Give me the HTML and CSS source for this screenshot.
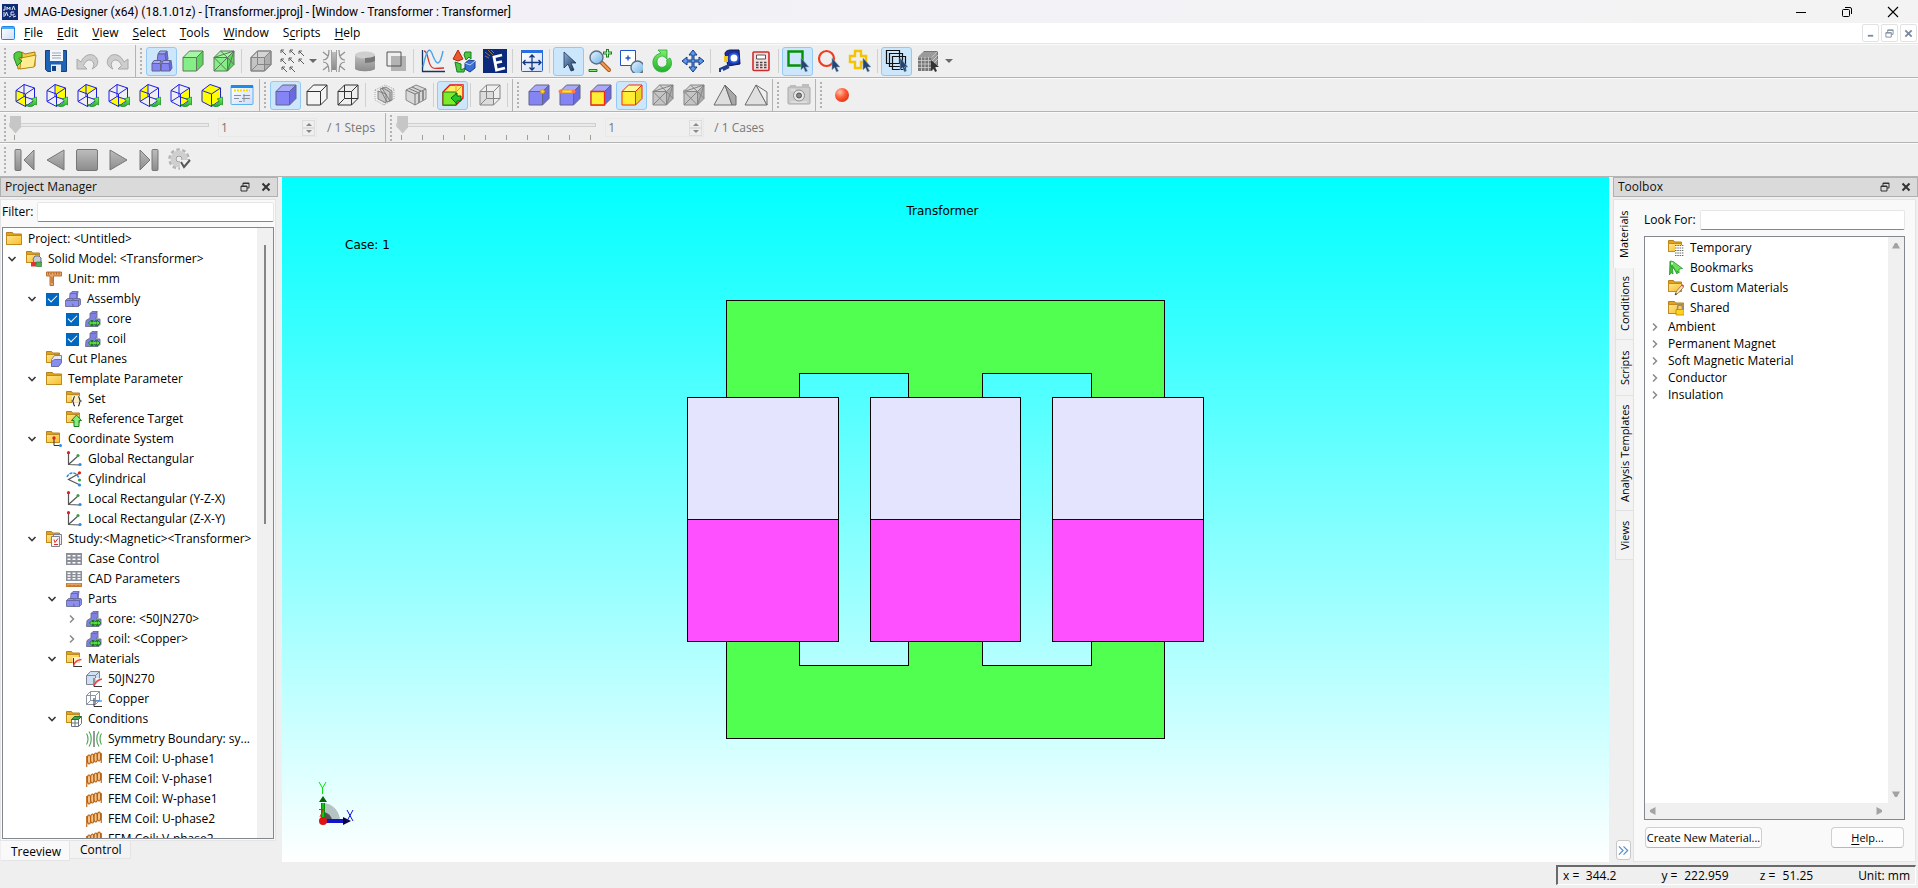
FILE: index.html
```html
<!DOCTYPE html>
<html lang="en">
<head>
<meta charset="utf-8">
<title>JMAG-Designer (x64) (18.1.01z) - [Transformer.jproj]</title>
<link rel="stylesheet" href="styles.css">
</head>
<body>
<svg class="defs" aria-hidden="true">
  <defs>
    <linearGradient id="gFold" x1="0" y1="0" x2="1" y2="1"><stop offset="0" stop-color="#ffe58a"/><stop offset="1" stop-color="#f7bd2c"/></linearGradient>
    <linearGradient id="gGray" x1="0" y1="0" x2="0" y2="1"><stop offset="0" stop-color="#bdbdbd"/><stop offset="1" stop-color="#8c8c8c"/></linearGradient>
    <linearGradient id="gLens" x1="0" y1="0" x2="1" y2="1"><stop offset="0" stop-color="#e8f6ff"/><stop offset="1" stop-color="#6fb2e4"/></linearGradient>
    <linearGradient id="gGreen" x1="0" y1="0" x2="0" y2="1"><stop offset="0" stop-color="#7df06a"/><stop offset="1" stop-color="#21b12b"/></linearGradient>
    <linearGradient id="gCur" x1="0" y1="0" x2="1" y2="1"><stop offset="0" stop-color="#8fb0dd"/><stop offset="1" stop-color="#16304f"/></linearGradient>
    <radialGradient id="gRed" cx="0.35" cy="0.3" r="0.8"><stop offset="0" stop-color="#ffc0a8"/><stop offset="0.5" stop-color="#ff5a35"/><stop offset="1" stop-color="#d8300f"/></radialGradient>
    <linearGradient id="gWin" x1="0" y1="0" x2="1" y2="1"><stop offset="0" stop-color="#ffffff"/><stop offset="1" stop-color="#cfdcf8"/></linearGradient>
  </defs>
  <symbol id="cube" viewBox="0 0 24 24"><g class="k"><path class="ft" d="M2 8.500 8.500 2H22l-6.500 6.500z"/><path class="fs" d="M15.500 8.500 22 2v13.500L15.500 22z"/><path class="ff" d="M2 8.500h13.500V22H2z"/></g></symbol>
  <symbol id="wire" viewBox="0 0 24 24"><path class="k nf" d="M2 8.500 8.500 2H22v13.500L15.500 22H2zM2 8.500h13.500V22M15.500 8.500 22 2M8.500 2v13.500H22M8.500 15.500 2 22"/></symbol>
  <symbol id="mesh" viewBox="0 0 24 24"><use href="#cube"/><path class="k nf" d="m2 8.500 13.500 13.500M15.500 8.500 2 22M15.500 8.500 22 15.500M15.500 22 22 2M8.500 2l7 6.500M2 8.500 22 2"/></symbol>
  <symbol id="cubes" viewBox="0 0 24 24"><g class="k"><path class="ft" d="m8 5 2-3h7l-2 3z"/><path class="fs" d="m15 5 2-3 1 8-2 3z"/><path class="ff" d="M8 5h7l1 8H7z"/><path class="ft" d="m2 14.500 2-3h7l-1 3z"/><path class="ff" d="M2 14.500h8.500V22H2z"/><path class="ft" d="m11.500 14.500 2-3h7l-1.500 3z"/><path class="fs" d="m19 14.500 2-3 1 7.500-2 3z"/><path class="ff" d="M11.500 14.500H19l1 7.500h-9z"/></g></symbol>
  <symbol id="go" viewBox="0 0 24 24"><path d="M12 21c4 2 8 0 8-4l-2-1 5.500-2v8l-1.500-1c-2 3-7 4-10 0z" fill="url(#gGreen)" stroke="#118a1c" stroke-width=".7"/></symbol>
  <symbol id="vw" viewBox="0 0 24 24"><path d="M3 7.500 11 1.500 21.500 5v12L12.500 23.500 3 18.500zM3 7.500l9.500 3.500v12.500M12.500 11l9-6M11 1.500v12L3 18.500M11 13.500 21.500 17" fill="none" stroke="#1c1ce6"/><use href="#go"/></symbol>
  <symbol id="cur" viewBox="0 0 24 24"><path d="M7 3v16l4-4 3 7 3-1-3-7h5z" fill="url(#gCur)" stroke="#1d3557" stroke-width=".8"/></symbol>
  <symbol id="scur" viewBox="0 0 24 24"><path d="M15 9v12l2.500-2.500L19.500 23l2-1-2-4H23z" fill="#23456f" stroke="#8fa9c8" stroke-width=".6"/></symbol>
  <symbol id="cross" viewBox="0 0 24 24"><path d="m12 1 4 5h-3v5h5V8l5 4-5 4v-3h-5v5h3l-4 5-4-5h3v-5H6v3l-5-4 5-4v3h5V6H8z" fill="#5d98ec" stroke="#12387f"/></symbol>
  <symbol id="mag" viewBox="0 0 24 24"><path d="m13 13 8 8" stroke="#a85a20" stroke-width="4" stroke-linecap="round"/><path d="m14 14 7 7" stroke="#f59a4c" stroke-width="2" stroke-linecap="round"/><circle cx="8.500" cy="8.500" r="6.500" fill="url(#gLens)" stroke="#5c6f86" stroke-width="1.400"/></symbol>

  <symbol id="fold" viewBox="0 0 16 16"><path d="M.5 13.500v-12h6l1 1.500h8v10.500z" fill="#e0a41f" stroke="#b5801a"/><path d="M.5 4.500h15v9H.5z" fill="url(#gFold)" stroke="#c08b1c"/></symbol>
  <symbol id="sfold" viewBox="0 0 16 16"><path d="M.5 11.500V.5h5l1 1.500h7v9.500z" fill="#e0a41f" stroke="#b5801a"/><path d="M.5 3.500h13v8H.5z" fill="url(#gFold)" stroke="#c08b1c"/></symbol>
  <symbol id="i-model" viewBox="0 0 16 16"><use href="#sfold"/><path d="M7 8 9 5h4l2 2v5H8z" fill="#c8cad8" stroke="#666a80"/><path d="M5 11h5v4.500H5z" fill="#e0352b"/><path d="M10.500 11h5v4.500h-5z" fill="#4fae4b" stroke="#23702a" stroke-width=".6"/></symbol>
  <symbol id="i-unit" viewBox="0 0 16 16"><path d="M.5 1h15v4H7.500v9.500h-3.500V5H.5z" fill="#e8a468" stroke="#b5651d" stroke-width=".9"/><path d="M2.500 1.500v2M5 1.500v2M8 1.500v2M10.500 1.500v2M13 1.500v2M5 7h2M5 9h2M5 11h2" stroke="#9a5212" stroke-width=".8"/></symbol>
  <symbol id="i-asm" viewBox="0 0 16 16"><g fill="#8e8ef0" stroke="#5f6390" stroke-width=".8"><path d="M5 2.500 7 .500h6L12 8H4.500z"/><path d="M5 2.500h6.500l1.500-2M11.500 2.500 12 8"/><path d="M.5 9.500 2.500 7.500h5.500v8H.5z"/><path d="m8 9.500 1.500-2h5l1 1v5l-2 2H8z"/><path d="M.5 9.500h13v6M13.500 9.500l1.500-2"/></g></symbol>
  <symbol id="i-part" viewBox="0 0 16 16"><g fill="#8080e2" stroke="#6a6f86" stroke-width=".9"><path d="M1 9.500 5 7V2.500L7 .500h5L10.500 3v5H15v5.500l-2 2H.5z"/><path d="M5 2.500h5.500L12 .500v7"/></g><path d="m3.500 12 3-3v2h1V9l2 2 1.500-2v2h1V9l3 3-3 3v-2h-1v2L9.500 13l-2 2v-2h-1v2z" fill="#55e03c" stroke="#14681a" stroke-width=".8"/></symbol>
  <symbol id="i-cut" viewBox="0 0 16 16"><use href="#sfold"/><path d="m5.500 8.500 3-4h7v7l-3 4h-7z" fill="#e4e7f4" stroke="#7c8299"/><path d="m5.500 10.500 3-2h7v3l-3 4h-7z" fill="#8a8df0" stroke="#6a6fa8"/></symbol>
  <symbol id="i-set" viewBox="0 0 16 16"><use href="#sfold"/><path d="M6 5h9v10H6z" fill="#fff" opacity=".7"/><path d="M9 5.500c-2 0-1 4-2.500 4.500C8 10.500 7 15 9 15M12 5.500c2 0 1 4 2.500 4.500-1.500.5-.5 5-2.500 5" fill="none" stroke="#333" stroke-width="1.200"/></symbol>
  <symbol id="i-ref" viewBox="0 0 16 16"><use href="#sfold"/><path d="m10.500 4 5 5.500h-2.500v6H8v-6H5.500z" fill="#86ee7c" stroke="#1c7d24"/></symbol>
  <symbol id="i-coord" viewBox="0 0 16 16"><use href="#sfold"/><path d="M8 7v7.500h7" fill="none" stroke="#333"/><circle cx="8" cy="7" r="1.700" fill="#e02020"/><circle cx="14.500" cy="14.500" r="1.500" fill="#2a8ae0"/></symbol>
  <symbol id="i-axes" viewBox="0 0 16 16"><path d="M2.500 2v11.500L14 14M2.500 13.500 12 5" fill="none" stroke="#555" stroke-width="1.200"/><circle cx="2.500" cy="1.700" r="1.600" fill="#e02020"/><circle cx="12" cy="4.500" r="1.600" fill="#3f9e45"/><circle cx="14" cy="13.500" r="1.600" fill="#2a8ae0"/></symbol>
  <symbol id="i-cyl" viewBox="0 0 16 16"><path d="M14 2 2.500 8.500 14 14" fill="none" stroke="#555" stroke-width="1.200"/><path d="M1 6c2-5 9-6 12 1" fill="none" stroke="#2a8ae0" stroke-width="1.600" stroke-dasharray="3 1"/><circle cx="13.500" cy="1.800" r="1.600" fill="#e02020"/><circle cx="13.500" cy="9" r="1.600" fill="#3f9e45"/><circle cx="13.500" cy="14" r="1.600" fill="#2a8ae0"/></symbol>
  <symbol id="i-study" viewBox="0 0 16 16"><use href="#sfold"/><path d="M7.500 3.500h8v10h-8z" fill="#eee" stroke="#7c8090"/><path d="M5.500 5.500h8v10h-8z" fill="#f6f6f6" stroke="#7c8090"/><path d="m8 8.500 1 3 3-4M8 13.500h4" fill="none" stroke="#d03030"/></symbol>
  <symbol id="i-grid" viewBox="0 0 16 16"><path d="M0 2h16v12H0z" fill="#8b8f9a"/><path d="M1.500 4h3v1.500h-3zM6.500 4h3v1.500h-3zM11.500 4h3v1.500h-3zM1.500 7.500h3V9h-3zM6.500 7.500h3V9h-3zM11.500 7.500h3V9h-3zM1.500 11h3v1.500h-3zM6.500 11h3v1.500h-3zM11.500 11h3v1.500h-3z" fill="#fff"/></symbol>
  <symbol id="i-cad" viewBox="0 0 16 16"><path d="M0 0h16v10H0z" fill="#8b8f9a"/><path d="M1.500 1.500h3V3h-3zM6.500 1.500h3V3h-3zM11.500 1.500h3V3h-3zM1.500 4.300h3v1.500h-3zM6.500 4.300h3v1.500h-3zM11.500 4.300h3v1.500h-3zM1.500 7h3v1.500h-3zM6.500 7h3v1.500h-3zM11.500 7h3v1.500h-3z" fill="#fff"/><path d="M0 12h16v4H0z" fill="#c9762d"/><path d="M2 12.500v2M4 12.500v1.500M6 12.500v2M8 12.500v1.500M10 12.500v2M12 12.500v1.500M14 12.500v2" stroke="#f7cf9c"/></symbol>
  <symbol id="i-mat" viewBox="0 0 16 16"><use href="#sfold"/><path d="M6.500 6h9v9.500h-9z" fill="#fff" opacity=".7"/><path d="M7.500 7v8.500H16" fill="none" stroke="#333"/><path d="M7.500 15c1-4 3-6 8-6.500" fill="none" stroke="#f04040" stroke-width="1.300"/></symbol>
  <symbol id="i-steel" viewBox="0 0 16 16"><path d="m.5 4.500 4-4h9v9l-4 4h-9zM.5 4.500h9v9M9.500 4.500l4-4" fill="#cfe0f5" stroke="#7d8492"/><path d="M7 7h9v9H7z" fill="#fff" opacity=".6"/><path d="M8 7v8.500h8" fill="none" stroke="#333"/><path d="M8 15c1-4 3-6 8-7" fill="none" stroke="#f04040" stroke-width="1.300"/></symbol>
  <symbol id="i-cu" viewBox="0 0 16 16"><path d="m.5 4.500 4-4h9v9l-4 4h-9zM.5 4.500h9v9M9.500 4.500l4-4M4.500.5v9l-4 4M4.500 9.500h9" fill="#fff" stroke="#8d93a0"/><path d="M8 7v8.500h8" fill="none" stroke="#333"/><path d="M8 10h8" stroke="#4a90d9" stroke-width="1.300"/></symbol>
  <symbol id="i-cond" viewBox="0 0 16 16"><use href="#sfold"/><path d="m5.500 8.500 3-3h7v7l-3 3h-7zM5.500 8.500h7v7M9 8.500v7M5.500 12h7" fill="#fff" stroke="#6d7280"/><path d="m5.500 8.500 3-3h7l-3 3z" fill="#3da548" stroke="#25702e"/></symbol>
  <symbol id="i-sym" viewBox="0 0 16 16"><path d="M8 0v16" stroke="#333"/><path d="M.5 2.500c2 3 2 8 0 11M3 .5c3 4 3 11 0 15M15.500 2.500c-2 3-2 8 0 11M13 .5c-3 4-3 11 0 15" fill="none" stroke="#4fa657" stroke-width="1.200"/></symbol>
  <symbol id="i-coil" viewBox="0 0 16 16"><path d="M.7 16V5M15.300 2v10" stroke="#c9762d" stroke-width="1.300"/><g fill="#f4c48c" stroke="#b4600f" stroke-width="1.200"><ellipse cx="3" cy="8.500" rx="1.700" ry="4.500"/><ellipse cx="6.300" cy="7.500" rx="1.700" ry="4.500"/><ellipse cx="9.700" cy="6.500" rx="1.700" ry="4.500"/><ellipse cx="13" cy="5.500" rx="1.700" ry="4.500"/></g></symbol>
  <symbol id="i-temp" viewBox="0 0 16 16"><use href="#sfold"/><path d="M7 5h9v11H7z" fill="#fff"/><path d="M7 5.500h9M7 8h9M7 10.500h9M7 13h9M7 15.500h9" stroke="#666" stroke-dasharray="1.500 .8"/></symbol>
  <symbol id="i-book" viewBox="0 0 16 16"><path d="M2 2 4 5l1 9-2-1.500L1.500 15z" fill="#3fbf35" stroke="#21942a" stroke-width=".8"/><path d="M2 1 5 1.500l9.500 7-3.500.5v4L3 6z" fill="#6fe05a" stroke="#21942a" stroke-width=".8"/><path d="m4 5 5 9 .5-3" fill="#4fce40" stroke="#21942a" stroke-width=".8"/><circle cx="4" cy="3.500" r="1" fill="#fff"/></symbol>
  <symbol id="i-cust" viewBox="0 0 16 16"><use href="#sfold"/><path d="m7 15 1.500-4 5.500-6 2 1.500-5.500 6.500z" fill="#fbe3b6" stroke="#8a6a3c" stroke-width=".8"/><path d="m13.500 5.500 1-1.200 1.500 1.500-1 1.200z" fill="#e04848"/><path d="m7 15 .7-2 1.300 1.200z" fill="#222"/></symbol>
  <symbol id="i-share" viewBox="0 0 16 16"><use href="#fold"/><path d="M9.500 10V7.500a2.500 2.500 0 0 1 5 0V10" fill="none" stroke="#8d8d8d" stroke-width="1.400"/><path d="M8 9.500h8V15H8z" fill="#ffd21f" stroke="#b88d00" stroke-width=".8"/></symbol>
  <symbol id="dn" viewBox="0 0 10 10"><path d="m1.500 3 3.500 3.500L8.500 3" fill="none" stroke="#3a3a3a" stroke-width="1.600"/></symbol>
  <symbol id="rt" viewBox="0 0 10 10"><path d="M3 1.500 6.500 5 3 8.500" fill="none" stroke="#8a8a8a" stroke-width="1.500"/></symbol>
  <symbol id="float" viewBox="0 0 10 10"><path d="M1 4h6v5H1zM3 4V1h6v5H7" fill="none" stroke="currentColor"/><path d="M1 4.500h6M3 1.500h6" stroke="currentColor"/></symbol>
  <symbol id="cls" viewBox="0 0 10 10"><path d="m1.500 1.500 7 7M8.500 1.500l-7 7" stroke="currentColor" stroke-width="2"/></symbol>
</svg>

<div class="app">
  <header class="titlebar">
    <svg class="appicon" viewBox="0 0 16 16"><path d="M0 0h16v16H0z" fill="#0d2a72"/><path d="M3 2v4H1M5 6V3l1.500 2L8 3v3M10 6l1.500-4L13 6M12 8H9v3h3V9.500M3 12l1.500-4L6 12M2 8v5M7 13l2-1M11 13l3-1" fill="none" stroke="#dfe6ff"/></svg>
    <h1>JMAG-Designer (x64) (18.1.01z) - [Transformer.jproj] - [Window - Transformer : Transformer]</h1>
    <div class="winctl">
      <button aria-label="Minimize"><svg viewBox="0 0 12 12"><path d="M1 6.500h10" stroke="#000"/></svg></button>
      <button aria-label="Restore"><svg viewBox="0 0 12 12"><rect x="1.500" y="3.500" width="7" height="7" rx="1" fill="none" stroke="#000"/><path d="M4 1.500h5a1.500 1.500 0 0 1 1.500 1.500v5" fill="none" stroke="#000"/></svg></button>
      <button aria-label="Close"><svg viewBox="0 0 12 12"><path d="m1 1 10 10M11 1 1 11" stroke="#000" stroke-width="1.100"/></svg></button>
    </div>
  </header>

  <nav class="menubar">
    <svg class="docicon" viewBox="0 0 14 14"><rect x=".5" y=".5" width="13" height="13" rx="1" fill="url(#gWin)" stroke="#1f86e8"/><path d="M1 1h12v2H1z" fill="#4aa8f5"/></svg>
    <button><u>F</u>ile</button><button><u>E</u>dit</button><button><u>V</u>iew</button><button><u>S</u>elect</button><button><u>T</u>ools</button><button><u>W</u>indow</button><button>S<u>c</u>ripts</button><button><u>H</u>elp</button>
    <div class="mdi">
      <button aria-label="Minimize child"><svg viewBox="0 0 10 10"><path d="M2 7.500h6" stroke="currentColor" stroke-width="2"/></svg></button>
      <button aria-label="Restore child"><svg viewBox="0 0 10 10"><use href="#float"/></svg></button>
      <button aria-label="Close child"><svg viewBox="0 0 10 10"><use href="#cls"/></svg></button>
    </div>
  </nav>

  <div class="tbrow">
    <div class="tb">
      <button aria-label="Open"><svg viewBox="0 0 24 24"><path d="M5 20 3 6l6-3 3 2 10-2v14z" fill="#f7cf45" stroke="#a97a10"/><path d="m7 20 1-11 15-3-2 12z" fill="#ffec8e" stroke="#b58a1a"/><path d="M1 5c3-3 6-3 8-1v5c-2-1-3-1-3 1l3 2-5 5L1 9z" fill="#58c93e" stroke="#1f8a24"/></svg></button>
      <button aria-label="Save"><svg viewBox="0 0 24 24"><path d="M1.500 1.500h21v21h-19l-2-2z" fill="#1f63b5" stroke="#163f80"/><path d="M6 1h13v11H6z" fill="#f4f7fb"/><path d="M8 4h9M8 6.500h9M8 9h9" stroke="#9aa4b2"/><path d="M7 15.500h10V23H7z" fill="#e8edf4"/><path d="M8 17h4v5H8z" fill="#163f80"/></svg></button>
      <button aria-label="Undo"><svg viewBox="0 0 24 24"><path d="M2 10v10h10l-3.500-3.500c2-6 8-7.500 10-2.500.8 2 0 4-1.500 6 5-2 7-6 5-10C19 3.500 10 4 6 13z" fill="#cdcdcd" stroke="#a8a8a8"/></svg></button>
      <button aria-label="Redo"><svg viewBox="0 0 24 24"><path d="M22 10v10H12l3.500-3.500c-2-6-8-7.500-10-2.500-.8 2 0 4 1.500 6-5-2-7-6-5-10C5 3.500 14 4 18 13z" fill="#cdcdcd" stroke="#a8a8a8"/></svg></button>
    </div>
    <div class="tb last">
      <button class="on blue" aria-label="Model view"><svg viewBox="0 0 24 24"><use href="#cubes"/></svg></button>
      <button class="green" aria-label="Solid"><svg viewBox="0 0 24 24"><use href="#cube"/></svg></button>
      <button class="green" aria-label="Mesh"><svg viewBox="0 0 24 24"><use href="#mesh"/></svg></button>
      <i class="sep"></i>
      <button class="gray" aria-label="Outline"><svg viewBox="0 0 24 24"><use href="#cube"/><use href="#wire"/></svg></button>
      <button aria-label="Vector plot"><svg viewBox="0 0 24 24"><g fill="none" stroke="#5e5e5e"><path d="M6 6 1 1m0 3V1h3M15 6l-5-5m0 3V1h3M24 7l-5-5m0 3V2h3M6 15l-5-5m0 3v-3h3M14 14 9 9m0 3V9h3M24 15l-5-5m0 3v-3h3M7 23l-5-5m0 3v-3h3M15 23l-5-5m0 3v-3h3"/></g></svg></button>
      <button class="drop" aria-label="Vector plot options"><svg viewBox="0 0 8 8"><path d="M0 2h8L4 6z" fill="#6a6a6a"/></svg></button>
      <button aria-label="Flux lines"><svg viewBox="0 0 24 24"><path d="M9.500 3h5v18h-5z" fill="url(#gGray)"/><path d="M9.500 1v22M14.500 1v22" stroke="#a0a0a0" fill="none"/><path d="M7 1c0 7-2 10-6 10M7 23c0-7-2-10-6-10M17 1c0 7 2 10 6 10M17 23c0-7 2-10 6-10M1 3l5 4M23 3l-5 4M1 21l5-4M23 21l-5-4" fill="none" stroke="#8f8f8f" stroke-width="1.200"/></svg></button>
      <button aria-label="Section"><svg viewBox="0 0 24 24"><path d="M2 6v14c3 3 17 3 20 0V6z" fill="url(#gGray)"/><ellipse cx="12" cy="6" rx="10" ry="3.500" fill="#cfcfcf"/><path d="M12 9v5c4 0 8-1 10-2V7c-2 1-6 2-10 2z" fill="#777"/></svg></button>
      <button aria-label="Overlay"><svg viewBox="0 0 24 24"><path d="M7 7h15v15H7z" fill="#b3b3b3"/><path d="M3 3h14v14H3z" fill="none" stroke="#555"/></svg></button>
      <i class="sep"></i>
      <button aria-label="Graph"><svg viewBox="0 0 24 24"><path d="M1.500 1v21.500H24" fill="none" stroke="#15345f" stroke-width="1.300"/><path d="M3 2c5 0 3 15 9 17 2 1 6 0 11 0" fill="none" stroke="#d8332c" stroke-width="1.300"/><path d="M2 18C6-2 9-2 12 7c4 10 7 10 10-5" fill="none" stroke="#4aa3e8" stroke-width="1.400"/></svg></button>
      <button aria-label="Optimize"><svg viewBox="0 0 24 24"><path d="m6 1 5 9-5 2-5-2z" fill="#f0562e" stroke="#a52a10"/><path d="m13 3 6 0v7l-2-2-3 3-2-5z" fill="#4cc840" stroke="#1b7d22"/><path d="m3 13 6 2v6l4-2-1 4H5z" fill="#4cc840" stroke="#1b7d22"/><path d="m13 14 4-3 6 1v7l-5 4-5-3z" fill="#3a6fd8" stroke="#173f8a"/><path d="m13 14 5 2 5-4" fill="none" stroke="#bcd3ff"/></svg></button>
      <button aria-label="Express"><svg viewBox="0 0 24 24"><path d="M0 0h24v24H0z" fill="#0b2a7c"/><path d="m19 6-8 2 2.500 13 8.500-2M12 14l7-1.500" fill="none" stroke="#fff" stroke-width="2.800"/><path d="m2 3 5 4M5 1l5 5M8 1l3 3M2 7l4 2" stroke="#b8862f" stroke-width=".8"/></svg></button>
      <i class="sep"></i>
      <button aria-label="Fit window"><svg viewBox="0 0 24 24"><rect x="1.500" y="1.500" width="21" height="21" rx="1" fill="url(#gWin)" stroke="#2a62c9"/><path d="M1 1h22v3H1z" fill="#2a6fe0"/><path d="M12 6v15M3 13.500h18M9.500 8.500 12 6l2.500 2.500M9.500 18.500 12 21l2.500-2.500M5.500 11 3 13.500 5.500 16M18.500 11l2.500 2.500-2.500 2.500" fill="none" stroke="#12387f" stroke-width="1.300"/></svg></button>
      <i class="sep"></i>
      <button class="on" aria-label="Select"><svg viewBox="0 0 24 24"><use href="#cur"/></svg></button>
      <button aria-label="Zoom"><svg viewBox="0 0 24 24"><use href="#mag"/><path d="M15 4h9M19.500 0v8.500" stroke="#1c7d24" stroke-width="3"/><path d="M16 4h7M19.500 1v6.500" stroke="#c8f7b8"/><path d="M1 20.500h8v2H1z" fill="#86ee7c" stroke="#1c7d24"/></svg></button>
      <button aria-label="Zoom area"><svg viewBox="0 0 24 24"><path d="M1.500 1.500h15v15h-15z" fill="#fff" stroke="#1f55c8"/><path d="M6.500 9h5M9 6.500v5" stroke="#1f55c8" stroke-width="1.400"/><svg x="10" y="10" width="14" height="14" viewBox="0 0 24 24"><use href="#mag"/></svg></svg></button>
      <button aria-label="Rotate"><svg viewBox="0 0 24 24"><path d="M8 1h9v9l-3-2.500C10 6 7 9 7 13c0 7 10 7 10 0l-.5-2 3.500-2c4 6 0 14-8 14S1 14 4 9c1.500-3 4-4 7-5z" fill="url(#gGreen)" stroke="#28a73a" stroke-width=".8"/></svg></button>
      <button aria-label="Pan"><svg viewBox="0 0 24 24"><use href="#cross"/></svg></button>
      <i class="sep"></i>
      <button aria-label="Measure"><svg viewBox="0 0 24 24"><path d="M7 5c0-3 3-4 6-4h8l1 14-12 2z" fill="#1b2f9e" stroke="#0d1650"/><circle cx="16" cy="9" r="4.500" fill="#fff" stroke="#2456d8" stroke-width="2"/><path d="M6 7h4v6H6z" fill="#f2c61c"/><path d="m11 16-9 4v3M11 18l-6 3" stroke="#24408c" stroke-width="2" fill="none"/></svg></button>
      <button aria-label="Calculator"><svg viewBox="0 0 24 24"><rect x="4" y="3" width="16" height="18.500" rx="1" fill="#f7dede" stroke="#cf2d2d" stroke-width="1.600"/><path d="M7.500 6h9v4h-9z" fill="#fff" stroke="#555"/><path d="M7 13.500h2.500M11 13.500h2.500M15 13.500h2.500M7 16h2.500M11 16h2.500M15 16h2.500M7 18.500h2.500M11 18.500h2.500M15 18.500h2.500" stroke="#444" stroke-width="1.500"/></svg></button>
      <i class="sep"></i>
      <button class="on" aria-label="Box select"><svg viewBox="0 0 24 24"><path d="M2.500 2.500h14v14h-14z" fill="none" stroke="#069006" stroke-width="2.400"/><use href="#scur"/></svg></button>
      <button aria-label="Circle select"><svg viewBox="0 0 24 24"><circle cx="9.500" cy="9.500" r="7.500" fill="none" stroke="#f23a1d" stroke-width="2.200"/><use href="#scur"/></svg></button>
      <button aria-label="Polygon select"><svg viewBox="0 0 24 24"><path d="M7 2h6v5h5v6h-5v6H7v-6H2V7h5z" fill="none" stroke="#f5c400" stroke-width="2.400"/><use href="#scur"/></svg></button>
      <i class="sep"></i>
      <button class="on" aria-label="Layer select"><svg viewBox="0 0 24 24"><path d="M1.500 1.500h13v13h-13zM4.500 4.500h13v13h-13zM7.500 7.500h13v13h-13z" fill="none" stroke="#111" stroke-width="1.200"/><use href="#scur"/></svg></button>
      <button aria-label="Mesh select"><svg viewBox="0 0 24 24"><path d="M2 8 8 2h14v14l-6 6H2z" fill="#777"/><path d="M2 11.500h14M2 15h14M2 18.500h14M5.500 8v14M9 8v14M12.500 8v14M2 8h14v14M16 8l6-6M4 6h14v14M6 4h14v14M16 12l6-6M16 16l6-6" fill="none" stroke="#d0d0d0" stroke-width=".8"/><path d="M15 11v11l2.500-2.500L19 23l2-1-2-4h4z" fill="#333"/></svg></button>
      <button class="drop" aria-label="Mesh select options"><svg viewBox="0 0 8 8"><path d="M0 2h8L4 6z" fill="#6a6a6a"/></svg></button>
    </div>
  </div>

  <div class="tbrow">
    <div class="tb">
      <button aria-label="Front view"><svg viewBox="0 0 24 24"><path d="m3 7.500 9.500 3.500v12.500L3 18.500z" fill="#ff0"/><use href="#vw"/></svg></button>
      <button aria-label="Back view"><svg viewBox="0 0 24 24"><path d="M11 1.500 21.500 5v12L11 13.500z" fill="#ff0"/><use href="#vw"/></svg></button>
      <button aria-label="Top view"><svg viewBox="0 0 24 24"><path d="m3 7.500 8-6L21.500 5l-9 6z" fill="#ff0"/><use href="#vw"/></svg></button>
      <button aria-label="Bottom view"><svg viewBox="0 0 24 24"><path d="m3 18.500 8-5L21.500 17l-9 6.500z" fill="#ff0"/><use href="#vw"/></svg></button>
      <button aria-label="Left view"><svg viewBox="0 0 24 24"><path d="m3 7.500 8-6v12l-8 5z" fill="#ff0"/><use href="#vw"/></svg></button>
      <button aria-label="Right view"><svg viewBox="0 0 24 24"><path d="m12.500 11 9-6v12l-9 6.500z" fill="#ff0"/><use href="#vw"/></svg></button>
      <button aria-label="Isometric view"><svg viewBox="0 0 24 24"><path d="m3 7.500 8-6L21.500 5v12l-9 6.500L3 18.500zM3 7.500l9.500 3.500v12.500M12.500 11l9-6" fill="#ff0" stroke="#1c1ce6"/><use href="#go"/></svg></button>
      <button aria-label="View list"><svg viewBox="0 0 24 24"><rect x="1" y="2.500" width="22" height="19" rx="1" fill="url(#gWin)" stroke="#5ab2ee"/><path d="M1 2h22v3H1z" fill="#1f8ae8"/><path d="M4 7.500h16" stroke="#f0e000" stroke-width="2" stroke-dasharray="2 1"/><path d="M4 12.500h7M13 12.500h7M4 15.500h5M12 15.500h8M9 18.500h3M14 11v8" stroke="#8a8f9c"/></svg></button>
    </div>
    <div class="tb">
      <button class="on blue" aria-label="Shaded"><svg viewBox="0 0 24 24"><use href="#cube"/></svg></button>
      <button class="line" aria-label="Hidden line"><svg viewBox="0 0 24 24"><use href="#cube"/></svg></button>
      <button class="line" aria-label="Wireframe"><svg viewBox="0 0 24 24"><use href="#wire"/></svg></button>
      <i class="sep"></i>
      <button aria-label="Clip planes"><svg viewBox="0 0 24 24"><path d="M2 7 12 2l9 4v10l-10 6-9-5zM2 7l9 4 10-5M11 11v11" fill="none" stroke="#aaa" stroke-dasharray="1 1"/><path d="m9 5 4-1 6 4v9l-2 1zM7 6l3-1 7 4v9l-3 1zM5 8l8 3v9l-8-4z" fill="#c9c9c9" stroke="#6e6e6e" stroke-width=".8"/></svg></button>
      <button aria-label="Clip solid"><svg viewBox="0 0 24 24"><path d="M2 7 12 2l10 4v10l-11 6-9-5z" fill="#d8d8d8" stroke="#888"/><path d="m2 7 9 4 11-5M11 11v11M5 5.500l9 4M8 4l9 4" fill="none" stroke="#777"/><path d="m14 9.500 2-1v11l-2 1zM18 8l2-1v10l-2 1z" fill="#8f8f8f"/></svg></button>
      <i class="sep"></i>
      <button class="on" aria-label="Show face"><svg viewBox="0 0 24 24"><path d="m2 9 7-7h13v13l-7 7H2z" fill="#ffee66" stroke="#e81010" stroke-width="1.400"/><path d="M2 9h13v13H2z" fill="#7dea2c" stroke="#1e7d14"/><path d="M15 2v7l7-7" fill="none" stroke="#f0a020"/><path d="m10 15 6-5v3h4v5h-4v3z" fill="#23c52c" stroke="#0c5f14"/></svg></button>
      <i class="sep"></i>
      <button class="gray" aria-label="Transparent"><svg viewBox="0 0 24 24"><path d="M2 8.500h13.500V22H2z" fill="#dcdcdc"/><use href="#wire"/></svg></button>
      <i class="sep"></i>
    </div>
    <div class="tb">
      <button class="blue" aria-label="Vertex"><svg viewBox="0 0 24 24"><use href="#cube"/><circle cx="15.500" cy="8.500" r="2" fill="#ffcf30" stroke="#d99a10"/></svg></button>
      <button class="blue" aria-label="Edge"><svg viewBox="0 0 24 24"><use href="#cube"/><path d="M2 8.500h13.500" stroke="#e0902a" stroke-width="3.500"/><path d="M2 8.500h13.500" stroke="#ffe82e" stroke-width="2"/><circle cx="2.500" cy="8.500" r="2" fill="#ff7a50"/><circle cx="15.500" cy="8.500" r="2" fill="#ff7a50"/></svg></button>
      <button class="blue" aria-label="Face"><svg viewBox="0 0 24 24"><use href="#cube"/><path d="M2 8.500h13.500V22H2z" fill="#ffee33" stroke="#f02a10" stroke-width="1.300"/></svg></button>
      <button class="on yel" aria-label="Part"><svg viewBox="0 0 24 24"><use href="#cube"/></svg></button>
      <button class="gray" aria-label="Element"><svg viewBox="0 0 24 24"><use href="#mesh"/></svg></button>
      <button class="gray" aria-label="Node"><svg viewBox="0 0 24 24"><use href="#mesh"/><circle cx="3" cy="8.500" r="2" fill="#999"/></svg></button>
      <button aria-label="Element face"><svg viewBox="0 0 24 24"><path d="M12 2 1 22h18z" fill="#dedede" stroke="#6b6b6b"/><path d="m12 2 11 11v9h-4z" fill="#a8a8a8" stroke="#6b6b6b"/></svg></button>
      <button aria-label="Element edge"><svg viewBox="0 0 24 24"><path d="M12 2 1 22h22z" fill="#e0e0e0" stroke="#6b6b6b"/><path d="m12 2 11 7v13z" fill="#efefef" stroke="#6b6b6b"/></svg></button>
    </div>
    <div class="tb">
      <button aria-label="Capture"><svg viewBox="0 0 24 24"><rect x="1" y="4" width="22" height="17" rx="1" fill="#cdcdcd" stroke="#a9a9a9"/><path d="M3 2h6v3H3zM15 1h7v4h-7z" fill="#bdbdbd"/><path d="M4 7h4M4 19h16" stroke="#eee"/><circle cx="12" cy="12.500" r="5.500" fill="#e6e6e6" stroke="#8d8d8d"/><circle cx="12" cy="12.500" r="2.500" fill="#888" stroke="#555"/></svg></button>
    </div>
    <div class="tb last">
      <button aria-label="Record"><svg viewBox="0 0 24 24"><circle cx="12" cy="12" r="7" fill="url(#gRed)"/></svg></button>
    </div>
  </div>

  <div class="tbrow short">
    <div class="tb steps">
      <div class="slide"><input type="range" min="1" max="10" value="1" disabled aria-label="Step"><div class="ticks"><i></i></div></div>
      <div class="spin"><input type="text" value="1" disabled aria-label="Step number"><span><button disabled aria-label="Step up"><svg viewBox="0 0 6 4"><path d="M0 4h6L3 1z"/></svg></button><button disabled aria-label="Step down"><svg viewBox="0 0 6 4"><path d="M0 0h6L3 3z"/></svg></button></span></div>
      <span class="cnt">/ 1 Steps</span>
    </div>
    <div class="tb last steps">
      <div class="slide"><input type="range" min="1" max="10" value="1" disabled aria-label="Case"><div class="ticks"><i></i><i></i><i></i><i></i><i></i><i></i><i></i><i></i><i></i><i></i></div></div>
      <div class="spin"><input type="text" value="1" disabled aria-label="Case number"><span><button disabled aria-label="Case up"><svg viewBox="0 0 6 4"><path d="M0 4h6L3 1z"/></svg></button><button disabled aria-label="Case down"><svg viewBox="0 0 6 4"><path d="M0 0h6L3 3z"/></svg></button></span></div>
      <span class="cnt">/ 1 Cases</span>
    </div>
  </div>

  <div class="tbrow">
    <div class="tb last play">
      <button aria-label="First"><svg viewBox="0 0 24 24"><rect x="2" y="1.500" width="6" height="21" rx="1"/><path d="M21 2v20L11 12z"/></svg></button>
      <button aria-label="Back"><svg viewBox="0 0 24 24"><path d="M20 2v20L3 12z"/></svg></button>
      <button aria-label="Stop"><svg viewBox="0 0 24 24"><rect x="1.500" y="1.500" width="21" height="21" rx="1.500"/></svg></button>
      <button aria-label="Play"><svg viewBox="0 0 24 24"><path d="M4 2v20l17-10z"/></svg></button>
      <button aria-label="Last"><svg viewBox="0 0 24 24"><rect x="15" y="1.500" width="6" height="21" rx="1"/><path d="M3 2v20l10-10z"/></svg></button>
      <button aria-label="Animation settings"><svg viewBox="0 0 24 24"><circle cx="11" cy="11" r="9.500" fill="none" stroke="#b4b4b4" stroke-width="2.500" stroke-dasharray="3.500 2.470"/><circle cx="11" cy="11" r="6" fill="none" stroke="#cfcfcf" stroke-width="5"/><circle cx="11" cy="11" r="3" fill="#eee" stroke="#999"/><path d="M12 12h10v10H12z" fill="#eee" stroke="none"/><path d="m13 14 3 5 6-7" fill="none" stroke="#555" stroke-width="2"/></svg></button>
    </div>
  </div>

  <main class="work">
    <aside class="left">
      <div class="dockhead"><h2>Project Manager</h2><button aria-label="Float"><svg viewBox="0 0 10 10"><use href="#float"/></svg></button><button aria-label="Close panel"><svg viewBox="0 0 10 10"><use href="#cls"/></svg></button></div>
      <div class="frame">
        <div class="field"><label for="filter">Filter:</label><input id="filter" type="text"></div>
        <div class="treebox">
          <ul class="tree">
            <li class="l0"><svg class="ic"><use href="#fold"/></svg>Project: &lt;Untitled&gt;</li>
            <li class="l1"><svg class="tw"><use href="#dn"/></svg><svg class="ic"><use href="#i-model"/></svg>Solid Model: &lt;Transformer&gt;</li>
            <li class="l2"><i class="tw"></i><svg class="ic"><use href="#i-unit"/></svg>Unit: mm</li>
            <li class="l2"><svg class="tw"><use href="#dn"/></svg><label><input type="checkbox" checked><svg class="ic"><use href="#i-asm"/></svg>Assembly</label></li>
            <li class="l3"><i class="tw"></i><label><input type="checkbox" checked><svg class="ic"><use href="#i-part"/></svg>core</label></li>
            <li class="l3"><i class="tw"></i><label><input type="checkbox" checked><svg class="ic"><use href="#i-part"/></svg>coil</label></li>
            <li class="l2"><i class="tw"></i><svg class="ic"><use href="#i-cut"/></svg>Cut Planes</li>
            <li class="l2"><svg class="tw"><use href="#dn"/></svg><svg class="ic"><use href="#fold"/></svg>Template Parameter</li>
            <li class="l3"><i class="tw"></i><svg class="ic"><use href="#i-set"/></svg>Set</li>
            <li class="l3"><i class="tw"></i><svg class="ic"><use href="#i-ref"/></svg>Reference Target</li>
            <li class="l2"><svg class="tw"><use href="#dn"/></svg><svg class="ic"><use href="#i-coord"/></svg>Coordinate System</li>
            <li class="l3"><i class="tw"></i><svg class="ic"><use href="#i-axes"/></svg>Global Rectangular</li>
            <li class="l3"><i class="tw"></i><svg class="ic"><use href="#i-cyl"/></svg>Cylindrical</li>
            <li class="l3"><i class="tw"></i><svg class="ic"><use href="#i-axes"/></svg>Local Rectangular (Y-Z-X)</li>
            <li class="l3"><i class="tw"></i><svg class="ic"><use href="#i-axes"/></svg>Local Rectangular (Z-X-Y)</li>
            <li class="l2"><svg class="tw"><use href="#dn"/></svg><svg class="ic"><use href="#i-study"/></svg>Study:&lt;Magnetic&gt;&lt;Transformer&gt;</li>
            <li class="l3"><i class="tw"></i><svg class="ic"><use href="#i-grid"/></svg>Case Control</li>
            <li class="l3"><i class="tw"></i><svg class="ic"><use href="#i-cad"/></svg>CAD Parameters</li>
            <li class="l3"><svg class="tw"><use href="#dn"/></svg><svg class="ic"><use href="#i-asm"/></svg>Parts</li>
            <li class="l4"><svg class="tw"><use href="#rt"/></svg><svg class="ic"><use href="#i-part"/></svg>core: &lt;50JN270&gt;</li>
            <li class="l4"><svg class="tw"><use href="#rt"/></svg><svg class="ic"><use href="#i-part"/></svg>coil: &lt;Copper&gt;</li>
            <li class="l3"><svg class="tw"><use href="#dn"/></svg><svg class="ic"><use href="#i-mat"/></svg>Materials</li>
            <li class="l4"><i class="tw"></i><svg class="ic"><use href="#i-steel"/></svg>50JN270</li>
            <li class="l4"><i class="tw"></i><svg class="ic"><use href="#i-cu"/></svg>Copper</li>
            <li class="l3"><svg class="tw"><use href="#dn"/></svg><svg class="ic"><use href="#i-cond"/></svg>Conditions</li>
            <li class="l4"><i class="tw"></i><svg class="ic"><use href="#i-sym"/></svg>Symmetry Boundary: sy...</li>
            <li class="l4"><i class="tw"></i><svg class="ic"><use href="#i-coil"/></svg>FEM Coil: U-phase1</li>
            <li class="l4"><i class="tw"></i><svg class="ic"><use href="#i-coil"/></svg>FEM Coil: V-phase1</li>
            <li class="l4"><i class="tw"></i><svg class="ic"><use href="#i-coil"/></svg>FEM Coil: W-phase1</li>
            <li class="l4"><i class="tw"></i><svg class="ic"><use href="#i-coil"/></svg>FEM Coil: U-phase2</li>
            <li class="l4"><i class="tw"></i><svg class="ic"><use href="#i-coil"/></svg>FEM Coil: V-phase2</li>
          </ul>
          <div class="vbar"><i></i></div>
        </div>
      </div>
      <div class="btabs"><button class="sel">Treeview</button><button>Control</button></div>
    </aside>

    <section class="view">
      <span class="vtitle">Transformer</span>
      <span class="vcase">Case: 1</span>
      <svg class="model" viewBox="0 0 1327 685">
        <g stroke="#000" shape-rendering="crispEdges">
          <path fill="#50ff50" fill-rule="evenodd" d="M444.500 123.500h438v438h-438zM517.500 196.500v292h109v-292zM700.500 196.500v292h109v-292z"/>
          <path fill="#e4e4ff" d="M405.500 220.500h151v122h-151zM588.500 220.500h150v122h-150zM770.500 220.500h151v122h-151z"/>
          <path fill="#ff50ff" d="M405.500 342.500h151v122h-151zM588.500 342.500h150v122h-150zM770.500 342.500h151v122h-151z"/>
        </g>
        <g>
          <path d="M41 644v-18a18 18 0 0 1 17 18z" fill="#b4c4c4"/><path d="M41 644v-9a9 9 0 0 1 9 9z" fill="#555"/>
          <path d="M41 644v-18" stroke="#0a8a0a" stroke-width="4"/><path d="M41 644v-18" stroke="#12d812" stroke-width="1.500"/><path d="m37 625 4-6 4 6z" fill="#056205"/>
          <path d="M41 644h22" stroke="#1414c8" stroke-width="4"/><path d="m61 640 8 4-8 4z" fill="#06063c"/>
          <path d="M37 632.500h6M41 633l-3 7" stroke="#f02020" fill="none"/><circle cx="41" cy="644" r="4" fill="#e01414"/>
          <path d="m37 605 3.500 6 3.500-6M40.500 610v7" stroke="#10e010" fill="none"/>
          <path d="m65 633 6 11M71 633l-6 11" stroke="#1010e0" fill="none"/>
        </g>
      </svg>
    </section>

    <aside class="right">
      <div class="dockhead"><h2>Toolbox</h2><button aria-label="Float"><svg viewBox="0 0 10 10"><use href="#float"/></svg></button><button aria-label="Close panel"><svg viewBox="0 0 10 10"><use href="#cls"/></svg></button></div>
      <div class="rbody">
        <div class="vtabs">
          <button class="sel t1">Materials</button><button class="t2">Conditions</button><button class="t3">Scripts</button><button class="t4">Analysis Templates</button><button class="t5">Views</button>
          <button class="more" aria-label="Collapse"><svg viewBox="0 0 12 12"><path d="m1 1.500 4.500 4.500L1 10.500M6 1.500l4.500 4.500L6 10.500" fill="none" stroke="#5b93cf" stroke-width="1.400"/></svg></button>
        </div>
        <div class="rframe">
          <div class="field"><label for="look">Look For:</label><input id="look" type="text"></div>
          <div class="listbox">
            <div class="lrow">
              <ul class="tree">
                <li><svg class="ic"><use href="#i-temp"/></svg>Temporary</li>
                <li><svg class="ic"><use href="#i-book"/></svg>Bookmarks</li>
                <li><svg class="ic"><use href="#i-cust"/></svg>Custom Materials</li>
                <li><svg class="ic"><use href="#i-share"/></svg>Shared</li>
                <li class="g"><svg class="tw"><use href="#rt"/></svg>Ambient</li>
                <li class="g"><svg class="tw"><use href="#rt"/></svg>Permanent Magnet</li>
                <li class="g"><svg class="tw"><use href="#rt"/></svg>Soft Magnetic Material</li>
                <li class="g"><svg class="tw"><use href="#rt"/></svg>Conductor</li>
                <li class="g"><svg class="tw"><use href="#rt"/></svg>Insulation</li>
              </ul>
              <div class="sbv"><svg viewBox="0 0 8 8"><path d="M0 6.500h8L5 1H3z"/></svg><svg viewBox="0 0 8 8"><path d="M0 1.500h8L5 7H3z"/></svg></div>
            </div>
            <div class="sbh"><svg viewBox="0 0 8 8"><path d="M6.500 0v8L1 5V3z"/></svg><svg viewBox="0 0 8 8"><path d="M1.500 0v8L7 5V3z"/></svg></div>
          </div>
          <div class="actions"><button class="wide">Create New Material...</button><button><u>H</u>elp...</button></div>
        </div>
      </div>
    </aside>
  </main>

  <footer class="status"><div class="coords"><span class="k1">x =</span><span class="v1">344.2</span><span class="k1">y =</span><span class="v1">222.959</span><span class="k1">z =</span><span class="v1">51.25</span><span class="unit">Unit: mm</span></div></footer>
</div>
</body>
</html>
```
FILE: styles.css
```css
* { box-sizing: border-box; }
html, body { height: 100%; margin: 0; }
body { font: 12px/16px "Open Sans", "Noto Sans", sans-serif; color: #000; background: #efefef; overflow: hidden; }
button, input { font: inherit; color: inherit; margin: 0; padding: 0; border: 0; background: none; border-radius: 0; }
h1, h2 { font: inherit; margin: 0; }
ul { list-style: none; margin: 0; padding: 0; }
svg { display: block; flex: none; }
u { text-underline-offset: 2px; }
.defs { position: absolute; width: 0; height: 0; }
.app { height: 100vh; display: flex; flex-direction: column; }

.titlebar { height: 23px; flex: none; display: flex; align-items: center; gap: 6px; padding-left: 2px; background: linear-gradient(90deg, #f2f0f8, #f3f3f3); }
.titlebar h1 { font-family: Roboto, "Open Sans", sans-serif; }
.appicon { width: 16px; height: 16px; }
.winctl { margin-left: auto; display: flex; padding-right: 2px; }
.winctl button { width: 46px; height: 22px; display: grid; place-items: center; }
.winctl svg { width: 12px; height: 12px; }

.menubar { height: 21px; flex: none; display: flex; align-items: center; background: #fff; border-bottom: 1px solid #e6e6e6; padding-left: 1px; }
.docicon { width: 14px; height: 14px; margin-right: 2px; }
.menubar > button { padding: 0 7px; }
.mdi { margin-left: auto; display: flex; gap: 2px; padding-right: 1px; color: #7a8a9a; }
.mdi button { width: 17px; height: 18px; border: 1px solid #e2e2e2; border-radius: 2px; display: grid; place-items: center; }
.mdi svg { width: 9px; height: 9px; }

.tbrow { height: 34px; flex: none; display: flex; border-bottom: 1px solid #b4b4b4; border-top: 1px solid #fafafa; }
.tbrow.short { height: 31px; }
.tb { display: flex; align-items: center; border-right: 1px solid #b4b4b4; padding-right: 1px; }
.tb::before { content: ""; width: 3px; height: 26px; margin: 0 3px 0 4px; background: repeating-linear-gradient(#b2b2b2 0 2px, transparent 2px 4px); background-size: 2px 100%; background-repeat: no-repeat; flex: none; }
.tb:first-child { padding-right: 2px; }
.tb:first-child::before { margin-right: 2px; }
.tb.last { border-right: 0; }
.tb > button { width: 31px; height: 29px; display: grid; place-items: center; border: 1px solid transparent; border-radius: 3px; flex: none; }
.tb > button svg { width: 24px; height: 24px; }
.tb > button.on { background: #cce6fb; border-color: #92caf5; }
.tb > button.drop { width: 11px; }
.tb > button.drop svg { width: 8px; height: 8px; }
.sep { width: 1px; height: 24px; margin: 0 3px 0 2px; background: #d0d0d0; flex: none; }

.k { stroke: var(--k, #555); stroke-linejoin: round; stroke-width: 1; }
.nf { fill: none; }
.ft { fill: var(--t); }
.ff { fill: var(--f); }
.fs { fill: var(--s); }
.blue { --t: #a9a9fa; --f: #8484f4; --s: #6a6ae0; --k: #606488; }
.green { --t: #a5f7a5; --f: #86ee86; --s: #5fd45f; --k: #5a7a5a; }
.gray { --t: #d4d4d4; --f: #c4c4c4; --s: #aeaeae; --k: #858585; }
.line { --t: #f4f4f4; --f: #f4f4f4; --s: #f4f4f4; --k: #333; }
.yel { --t: #fff899; --f: #ffee33; --s: #e8d820; --k: #f02a10; }

.slide { width: 200px; display: flex; flex-direction: column; gap: 1px; margin-right: 9px; }
.slide input { appearance: none; width: 100%; height: 19px; display: block; }
.slide input::-webkit-slider-runnable-track { height: 4px; background: #e9e9e9; border: 1px solid #d0d0d0; }
.slide input::-webkit-slider-thumb { appearance: none; width: 11px; height: 18px; margin-top: -8px; background: #c6c6c6; clip-path: polygon(0 0, 100% 0, 100% 65%, 50% 100%, 0 65%); }
.ticks { display: flex; justify-content: space-between; padding: 0 5px; height: 5px; }
.ticks i { width: 1px; background: #a0a090; }
.spin { width: 99px; height: 19px; display: flex; align-items: center; border: 1px solid #e8e8e8; color: #777; }
.spin input { width: 100%; min-width: 0; padding-left: 2px; }
.spin span { display: flex; flex-direction: column; margin-right: 1px; }
.spin button { width: 13px; height: 8px; border: 1px solid #ddd; display: grid; place-items: center; }
.spin svg { width: 6px; height: 4px; fill: #888; }
.cnt { color: #777; margin: 0 8px 0 10px; }
.play { fill: url(#gGray); stroke: #777; }

.work { flex: 1; min-height: 0; display: flex; }
.left { width: 279px; flex: none; display: flex; flex-direction: column; margin-right: 3px; }
.dockhead { height: 20px; flex: none; display: flex; align-items: center; background: #dadada; border: 1px solid #b0b0b0; padding: 0 1px 0 4px; color: #111; }
.dockhead h2 { margin-right: auto; }
.dockhead button { width: 21px; height: 16px; display: grid; place-items: center; color: #333; }
.dockhead svg { width: 10px; height: 10px; }
.left .dockhead { margin-right: 1px; }
.left .frame { flex: 1; min-height: 0; margin: 2px 3px 0 0; padding: 2px 1px 1px; border: 1px solid #e4e4e4; background: #f9f9f9; display: flex; flex-direction: column; gap: 5px; }
.field { display: flex; align-items: center; }
.field label { white-space: nowrap; }
.field input { flex: 1; min-width: 0; height: 20px; background: #fff; border: 1px solid #e6e6e6; border-bottom-color: #868686; border-radius: 2px; padding: 0 3px; margin-left: 4px; }
.treebox { flex: 1; min-height: 0; display: flex; border: 1px solid #828790; background: #fff; overflow: hidden; }
.left .tree { flex: 1; min-width: 0; padding: 1px 0 0 3px; }
.tree li { height: 20px; display: flex; align-items: center; white-space: nowrap; }
.tree label { display: flex; align-items: center; }
.ic { width: 16px; height: 16px; margin-right: 6px; }
.tw { width: 10px; height: 10px; margin: 0 9px 0 1px; flex: none; }
.l2 { padding-left: 20px; }
.l3 { padding-left: 40px; }
.l4 { padding-left: 60px; }
.tree input { appearance: none; width: 13px; height: 13px; margin-right: 6px; background: #0067c0; display: grid; place-items: center; }
.tree input::after { content: ""; width: 8px; height: 4px; border: solid #fff; border-width: 0 0 1px 1px; transform: rotate(-45deg); margin-bottom: 3px; }
.vbar { width: 16px; background: #f0f0f0; display: flex; justify-content: center; padding: 17px 0 314px; }
.vbar i { width: 2px; background: #858585; }
.btabs { flex: none; height: 21px; display: flex; align-items: flex-start; padding-left: 1px; }
.btabs button { height: 18px; padding: 0 8px 0 10px; border: 1px solid #e4e4e4; border-left: 0; border-top: 0; background: #f3f3f3; }
.btabs .sel { height: 20px; padding-top: 2px; background: #f9f9f9; }

.view { flex: 1; min-width: 0; position: relative; background: linear-gradient(#00ffff, #ffffff); font: 12px/14px "DejaVu Sans", sans-serif; }
.model { width: 100%; height: 100%; }
.vtitle { position: absolute; top: 27px; left: 0; right: 6px; text-align: center; }
.vcase { position: absolute; top: 61px; left: 63px; }

.right { width: 309px; flex: none; display: flex; flex-direction: column; padding-left: 4px; }
.rbody { flex: 1; min-height: 0; display: flex; padding-top: 2px; }
.vtabs { width: 21px; flex: none; display: flex; flex-direction: column; align-items: flex-end; border-right: 1px solid #e2e2e2; }
.vtabs button { width: 18px; writing-mode: vertical-rl; transform: rotate(180deg); background: #f3f3f3; border: 1px solid #e2e2e2; border-width: 1px 1px 0 0; text-align: center; line-height: 16px; font-size: 11px; }
.vtabs .sel { width: 21px; margin-right: -1px; background: #f9f9f9; border-width: 0 1px 1px 0; }
.vtabs .t1 { height: 69px; }
.vtabs .t2 { height: 72px; }
.vtabs .t3 { height: 56px; }
.vtabs .t4 { height: 115px; }
.vtabs .t5 { height: 49px; }
.vtabs .more { writing-mode: horizontal-tb; transform: none; width: 15px; height: 20px; margin: auto 2px 2px 0; border: 1px solid #c8c8c8; border-radius: 3px; background: #fdfdfd; display: grid; place-items: center; }
.more svg { width: 11px; height: 11px; }
.rframe { flex: 1; min-width: 0; margin-right: 2px; border: 1px solid #e4e4e4; border-left: 0; background: #f9f9f9; padding: 10px 10px 13px 10px; display: flex; flex-direction: column; }
.rframe .field { margin-bottom: 6px; }
.listbox { flex: 1; min-height: 0; border: 1px solid #828790; background: #fff; display: flex; flex-direction: column; }
.lrow { flex: 1; min-height: 0; display: flex; }
.lrow .tree { flex: 1; padding-top: 1px; }
.lrow li { padding-left: 23px; }
.lrow li.g { height: 17px; padding-left: 5px; }
.lrow .g .tw { margin-right: 8px; margin-left: 0; }
.sbv { width: 16px; background: #f0f0f0; display: flex; flex-direction: column; justify-content: space-between; align-items: center; padding: 5px 0; fill: #a3a3a3; }
.sbh { height: 16px; background: #f0f0f0; display: flex; justify-content: space-between; align-items: center; padding: 0 21px 0 4px; fill: #a3a3a3; }
.sbv svg, .sbh svg { width: 8px; height: 8px; }
.actions { display: flex; justify-content: space-between; padding: 7px 1px 0; }
.actions button { height: 21px; width: 73px; border: 1px solid #cfcfcf; border-bottom-color: #b8b8b8; border-radius: 4px; background: #fdfdfd; white-space: nowrap; font-size: 11px; }
.actions .wide { width: 117px; }

.status { height: 26px; flex: none; display: flex; justify-content: flex-end; padding: 3px 2px 3px 0; }
.coords { width: 360px; border: 1px solid #fff; border-top: 2px solid #6a6a6a; border-left: 2px solid #6a6a6a; display: flex; align-items: center; padding: 0 5px 0 5px; white-space: nowrap; }
.k1 { width: 23px; }
.v1 { width: 76px; }
.unit { margin-left: auto; }
```
